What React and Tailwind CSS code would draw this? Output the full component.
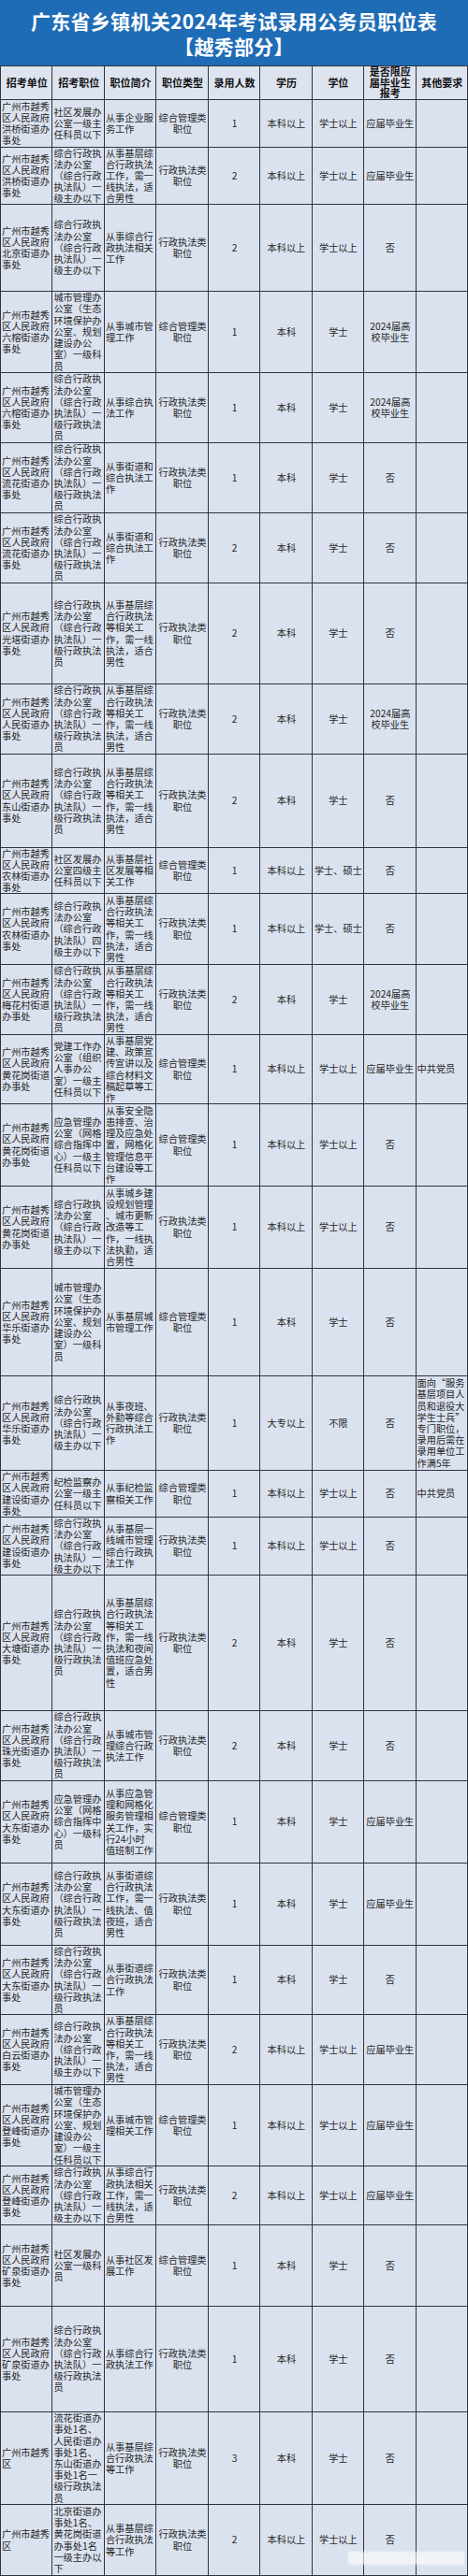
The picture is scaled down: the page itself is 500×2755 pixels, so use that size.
import React from 'react';

const U = (s) => `广州市越秀\n区人民政府\n${s}`;
const JIE = (name) => U(`${name}街道办\n事处`);

const ZHIFA_ZHUBAN = '综合行政执\n法办公室\n（综合行政\n执法队）一\n级主办以下';
const ZHIFA_YUAN = '综合行政执\n法办公室\n（综合行政\n执法队）一\n级行政执法\n员';
const CHENGGUAN = '城市管理办\n公室（生态\n环境保护办\n公室、规划\n建设办公\n室）一级科\n员';
const JICENG6 = '从事基层综\n合行政执法\n等相关工\n作，需一线\n执法，适合\n男性';
const ZF = '行政执法类\n职位';
const ZG = '综合管理类\n职位';
const GRAD = '2024届高\n校毕业生';

// [row height, 招考单位, 招考职位, 职位简介, 职位类型, 人数, 学历, 学位, 应届, 其他]
const rows = [
    ['h-[51px]', JIE('洪桥'), '社区发展办\n公室一级主\n任科员以下', '从事企业服\n务工作', ZG, '1', '本科以上', '学士以上', '应届毕业生', ''],
    ['h-[61px]', JIE('洪桥'), ZHIFA_ZHUBAN, '从事基层综\n合行政执法\n工作，需一\n线执法，适\n合男性', ZF, '2', '本科以上', '学士以上', '应届毕业生', ''],
    ['h-[93px]', JIE('北京'), ZHIFA_ZHUBAN, '从事综合行\n政执法相关\n工作', ZF, '2', '本科以上', '学士以上', '否', ''],
    ['h-[87px]', JIE('六榕'), CHENGGUAN, '从事城市管\n理工作', ZG, '1', '本科', '学士', GRAD, ''],
    ['h-[75px]', JIE('六榕'), ZHIFA_YUAN, '从事综合执\n法工作', ZF, '1', '本科', '学士', GRAD, ''],
    ['h-[75px]', JIE('流花'), ZHIFA_YUAN, '从事街道和\n综合执法工\n作', ZF, '1', '本科', '学士', '否', ''],
    ['h-[75px]', JIE('流花'), ZHIFA_YUAN, '从事街道和\n综合执法工\n作', ZF, '2', '本科', '学士', '否', ''],
    ['h-[108px]', JIE('光塔'), ZHIFA_YUAN, JICENG6, ZF, '2', '本科', '学士', '否', ''],
    ['h-[75px]', JIE('人民'), ZHIFA_YUAN, JICENG6, ZF, '2', '本科', '学士', GRAD, ''],
    ['h-[100px]', JIE('东山'), ZHIFA_YUAN, JICENG6, ZF, '2', '本科', '学士', '否', ''],
    ['h-[49px]', JIE('农林'), '社区发展办\n公室四级主\n任科员以下', '从事基层社\n区发展等相\n关工作', ZG, '1', '本科以上', '学士、硕士', '否', ''],
    ['h-[76px]', JIE('农林'), '综合行政执\n法办公室\n（综合行政\n执法队）四\n级主办以下', JICENG6, ZF, '1', '本科以上', '学士、硕士', '否', ''],
    ['h-[75px]', U('梅花村街道\n办事处'), ZHIFA_YUAN, JICENG6, ZF, '2', '本科', '学士', GRAD, ''],
    ['h-[74px]', U('黄花岗街道\n办事处'), '党建工作办\n公室（组织\n人事办公\n室）一级主\n任科员以下', '从事基层党\n建、政策宣\n传宣讲以及\n综合材料文\n稿起草等工\n作', ZG, '1', '本科以上', '学士以上', '应届毕业生', '中共党员'],
    ['h-[88px]', U('黄花岗街道\n办事处'), '应急管理办\n公室（网格\n综合指挥中\n心）一级主\n任科员以下', '从事安全隐\n患排查、治\n理及应急处\n置，网格化\n管理信息平\n台建设等工\n作', ZG, '1', '本科以上', '学士以上', '否', ''],
    ['h-[88px]', U('黄花岗街道\n办事处'), ZHIFA_ZHUBAN, '从事城乡建\n设规划管理\n、城市更新\n改造等工\n作，一线执\n法执勤，适\n合男性', ZF, '1', '本科以上', '学士以上', '否', ''],
    ['h-[115px]', JIE('华乐'), CHENGGUAN, '从事基层城\n市管理工作', ZG, '1', '本科', '学士', '否', ''],
    ['h-[101px]', JIE('华乐'), ZHIFA_ZHUBAN, '从事夜班、\n外勤等综合\n行政执法工\n作', ZF, '1', '大专以上', '不限', '否', '面向“服务\n基层项目人\n员和退役大\n学生士兵”\n专门职位，\n录用后需在\n录用单位工\n作满5年'],
    ['h-[50px]', JIE('建设'), '纪检监察办\n公室一级主\n任科员以下', '从事纪检监\n察相关工作', ZG, '1', '本科以上', '学士以上', '否', '中共党员'],
    ['h-[62px]', JIE('建设'), ZHIFA_ZHUBAN, '从事基层一\n线城市管理\n综合行政执\n法工作', ZF, '1', '本科以上', '学士以上', '否', ''],
    ['h-[145px]', JIE('大塘'), ZHIFA_YUAN, '从事基层综\n合行政执法\n等相关工\n作，需一线\n执法和夜间\n值班应急处\n置，适合男\n性', ZF, '2', '本科', '学士', '否', ''],
    ['h-[75px]', JIE('珠光'), ZHIFA_YUAN, '从事城市管\n理综合行政\n执法工作', ZF, '2', '本科', '学士', '否', ''],
    ['h-[88px]', JIE('大东'), '应急管理办\n公室（网格\n综合指挥中\n心）一级科\n员', '从事应急管\n理和网格化\n服务管理相\n关工作，实\n行24小时\n值班制工作', ZG, '1', '本科', '学士', '应届毕业生', ''],
    ['h-[88px]', JIE('大东'), ZHIFA_YUAN, '从事街道综\n合行政执法\n工作，需一\n线执法、值\n夜班，适合\n男性', ZF, '1', '本科', '学士', '应届毕业生', ''],
    ['h-[74px]', JIE('大东'), ZHIFA_YUAN, '从事街道综\n合行政执法\n工作', ZF, '1', '本科', '学士', '否', ''],
    ['h-[75px]', JIE('白云'), ZHIFA_ZHUBAN, JICENG6, ZF, '2', '本科以上', '学士以上', '应届毕业生', ''],
    ['h-[87px]', JIE('登峰'), '城市管理办\n公室（生态\n环境保护办\n公室、规划\n建设办公\n室）一级主\n任科员以下', '从事城市管\n理相关工作', ZG, '1', '本科以上', '学士以上', '应届毕业生', ''],
    ['h-[63px]', JIE('登峰'), ZHIFA_ZHUBAN, '从事综合行\n政执法相关\n工作，需一\n线执法，适\n合男性', ZF, '2', '本科以上', '学士以上', '应届毕业生', ''],
    ['h-[87px]', JIE('矿泉'), '社区发展办\n公室一级科\n员', '从事社区发\n展工作', ZG, '1', '本科', '学士', '否', ''],
    ['h-[113px]', JIE('矿泉'), ZHIFA_YUAN, '从事综合行\n政执法工作', ZF, '1', '本科', '学士', '否', ''],
    ['h-[99px]', '广州市越秀\n区', '流花街道办\n事处1名、\n人民街道办\n事处1名、\n东山街道办\n事处1名一\n级行政执法\n员', '从事基层综\n合行政执法\n等工作', ZF, '3', '本科', '学士', '否', ''],
    ['h-[76px]', '广州市越秀\n区', '北京街道办\n事处1名、\n黄花岗街道\n办事处1名\n一级主办以\n下', '从事基层综\n合行政执法\n等工作', ZF, '2', '本科以上', '学士以上', '否', ''],
];

const headers = ['招考单位', '招考职位', '职位简介', '职位类型', '录用人数', '学历', '学位', '是否限应\n届毕业生\n报考', '其他要求'];

// columns 1-3 and 9 are left aligned, the rest centered
const alignOf = (i) =>
    i < 3 || i === 8 ? 'justify-start text-left' : 'justify-center text-center';

const Cell = ({ children, align, bold }) => (
    <div
        className={`flex items-center overflow-hidden border-r border-[#30343f] pl-[1px] whitespace-pre ${align} ${
            bold ? 'font-bold text-[11px] leading-[11.5px] text-[#111]' : 'text-[10.2px] leading-[12.2px] text-[#262626]'
        }`}
    >
        <div>{children}</div>
    </div>
);

export default function App() {
    return (
        <div
            className="relative w-[500px] h-[2755px] overflow-hidden bg-[#dbe2ef]"
            style={{ fontFamily: '"Noto Sans CJK SC", "Noto Sans", sans-serif' }}
        >
            <div className="h-[70px] bg-[#1f6cb6] flex flex-col items-center justify-center pt-[1px] text-white font-bold text-[21px] leading-[27px] tracking-[0.3px]">
                <div>广东省乡镇机关2024年考试录用公务员职位表</div>
                <div>【越秀部分】</div>
            </div>

            <div className="grid grid-cols-9 h-[37px] border-t border-b border-l border-[#30343f] bg-[#dde3ef]">
                {headers.map((h) => (
                    <Cell key={h} align="justify-center text-center" bold>
                        {h}
                    </Cell>
                ))}
            </div>

            {rows.map(([h, ...cells], r) => (
                <div key={r} className={`grid grid-cols-9 border-b border-l border-[#30343f] bg-[#dbe2ef] ${h}`}>
                    {cells.map((c, i) => (
                        <Cell key={i} align={alignOf(i)}>
                            {c}
                        </Cell>
                    ))}
                </div>
            ))}

            {/* faint watermark in the corner */}
            <div className="absolute left-[372px] top-[2729px] w-[124px] h-[14px] bg-white/60 blur-[1px]" />
        </div>
    );
}
